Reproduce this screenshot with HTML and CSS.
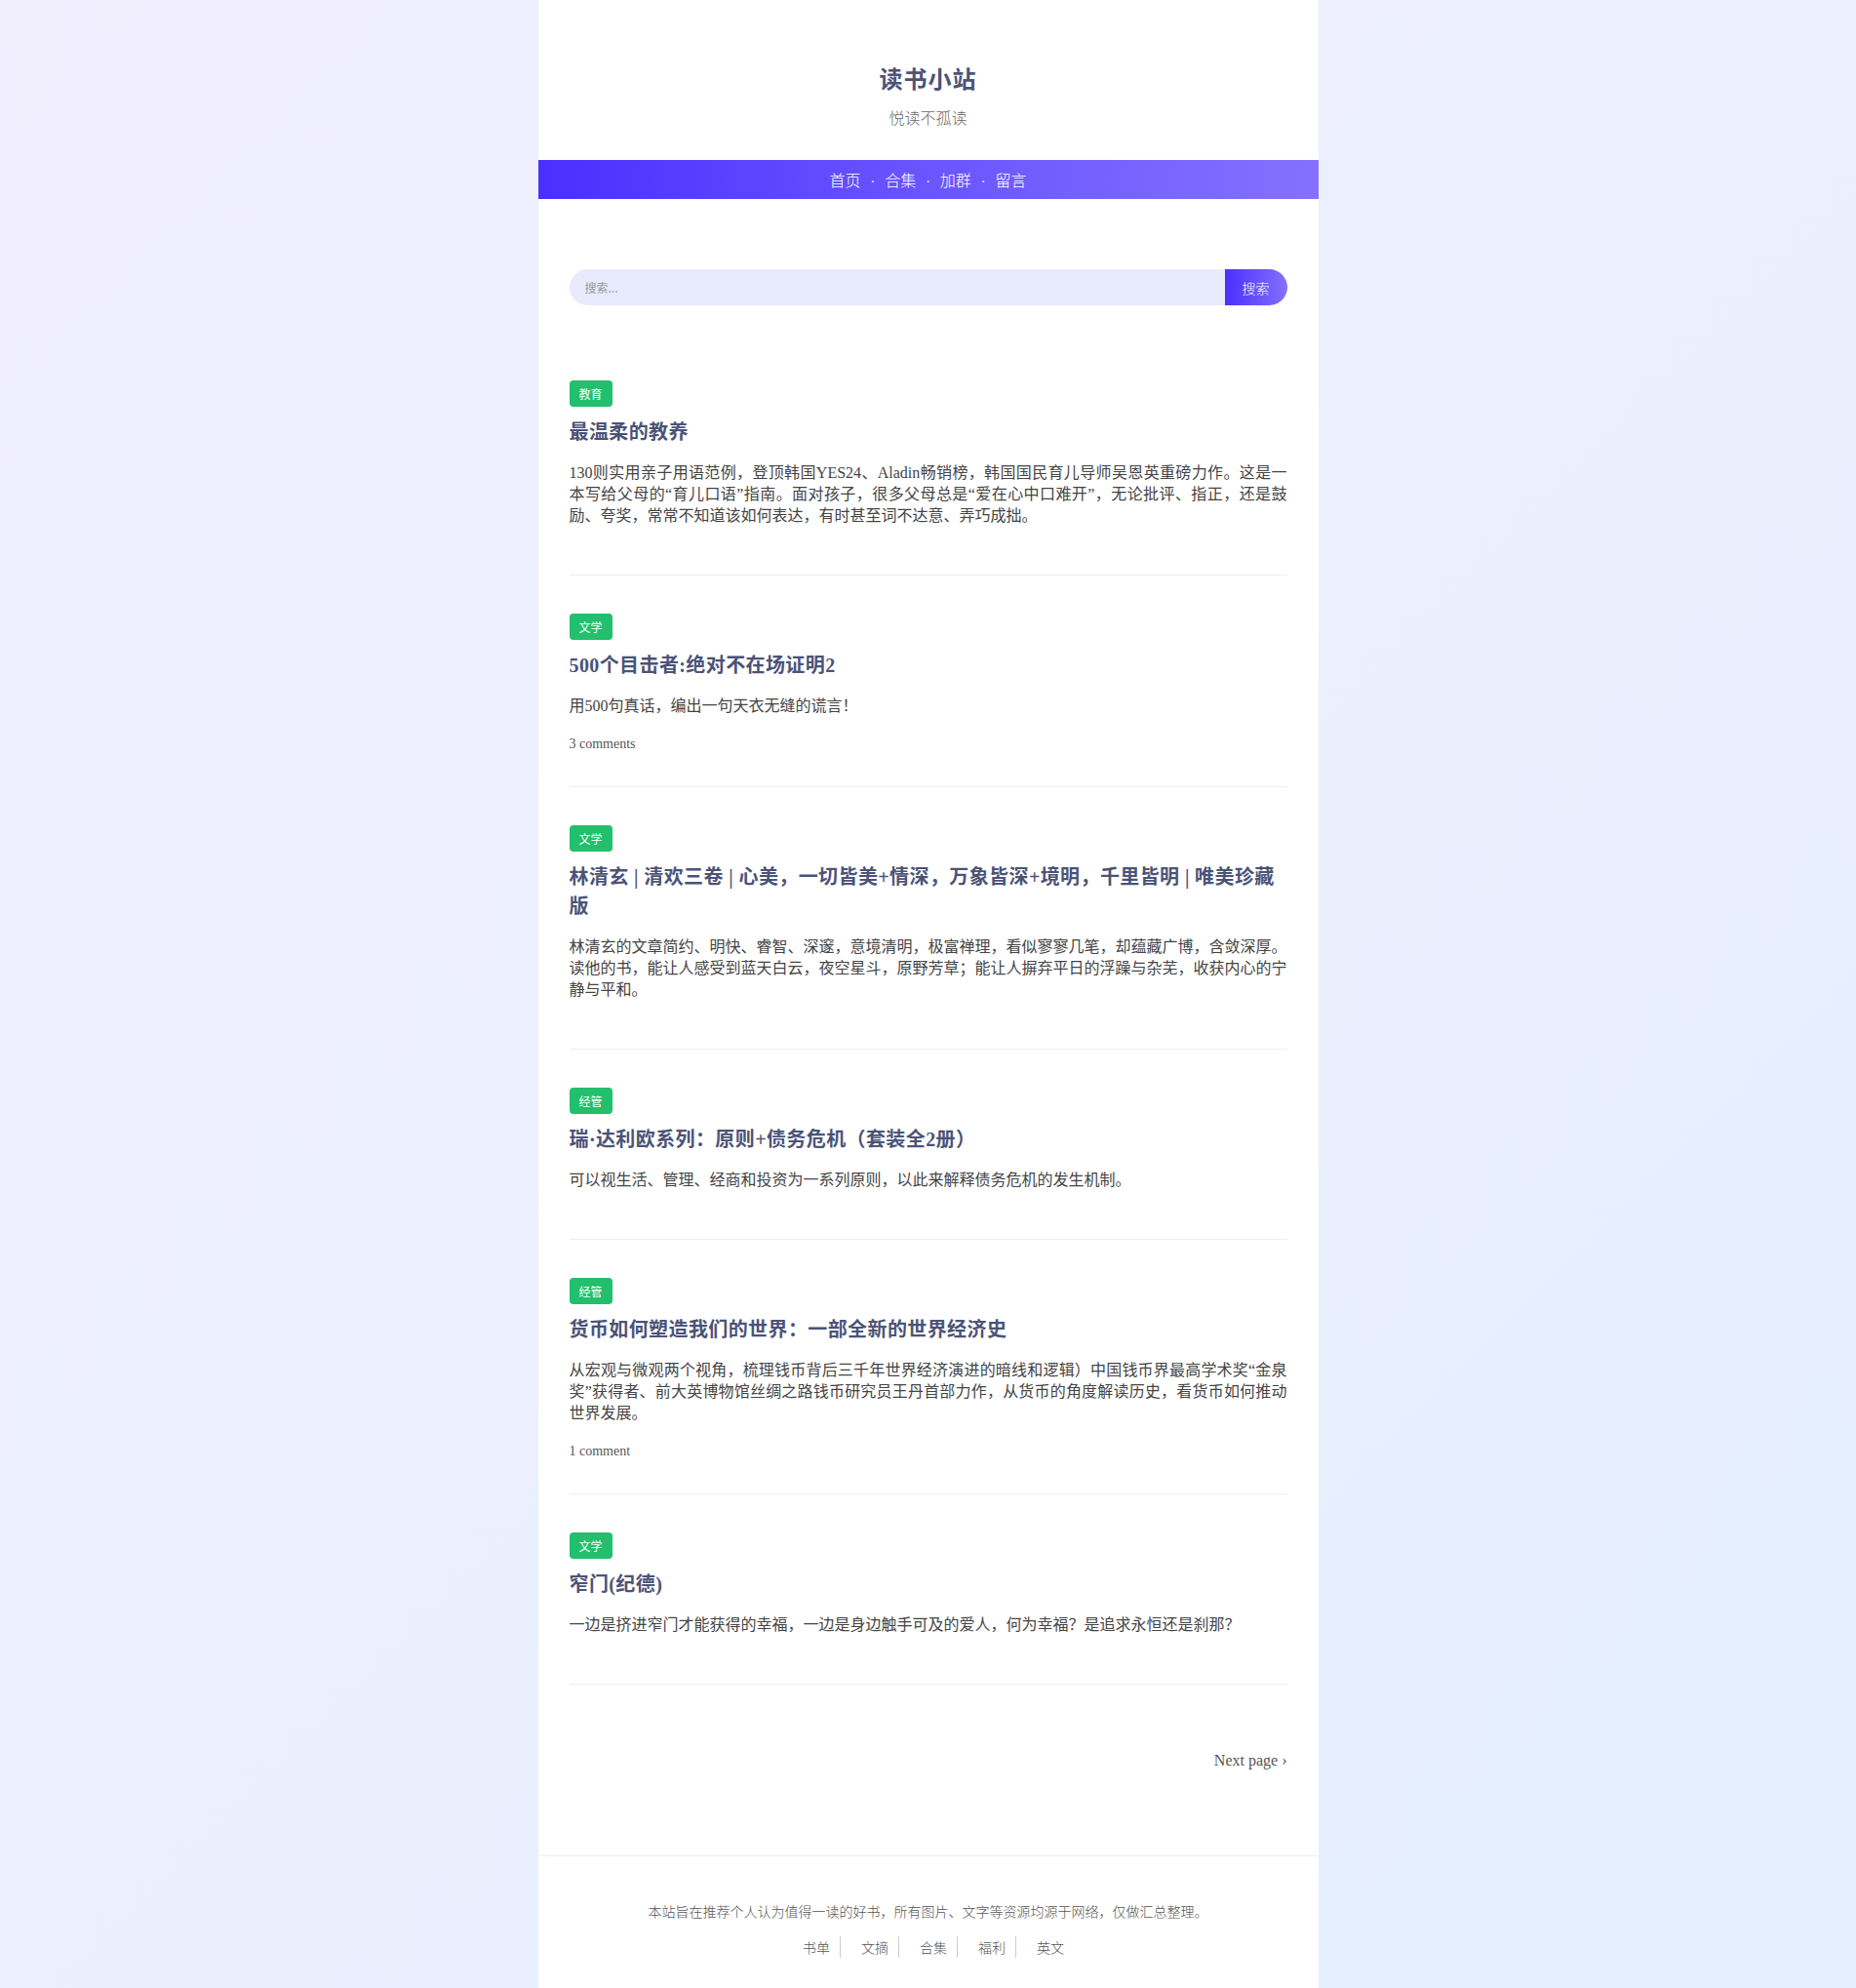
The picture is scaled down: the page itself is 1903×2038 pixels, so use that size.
FILE: index.html
```html
<!DOCTYPE html>
<html lang="zh-CN">
<head>
<meta charset="utf-8">
<title>读书小站</title>
<link rel="stylesheet" href="styles.css">
</head>
<body>
<div class="page">
  <header class="site-header">
    <h1 class="site-title">读书小站</h1>
    <p class="site-desc">悦读不孤读</p>
  </header>
  <nav class="site-nav">
    <a href="#">首页</a><span class="dot">·</span><a href="#">合集</a><span class="dot">·</span><a href="#">加群</a><span class="dot">·</span><a href="#">留言</a>
  </nav>
  <main class="main">
    <form class="search">
      <input class="search-input" type="text" placeholder="搜索...">
      <button class="search-btn" type="button">搜索</button>
    </form>

    <article class="post">
      <span class="tag">教育</span>
      <h2 class="post-title">最温柔的教养</h2>
      <p class="post-excerpt">130则实用亲子用语范例，登顶韩国YES24、Aladin畅销榜，韩国国民育儿导师吴恩英重磅力作。这是一本写给父母的“育儿口语”指南。面对孩子，很多父母总是“爱在心中口难开”，无论批评、指正，还是鼓励、夸奖，常常不知道该如何表达，有时甚至词不达意、弄巧成拙。</p>
    </article>

    <article class="post">
      <span class="tag">文学</span>
      <h2 class="post-title">500个目击者:绝对不在场证明2</h2>
      <p class="post-excerpt">用500句真话，编出一句天衣无缝的谎言！</p>
      <p class="comments">3 comments</p>
    </article>

    <article class="post">
      <span class="tag">文学</span>
      <h2 class="post-title">林清玄 | 清欢三卷 | 心美，一切皆美+情深，万象皆深+境明，千里皆明 | 唯美珍藏版</h2>
      <p class="post-excerpt">林清玄的文章简约、明快、睿智、深邃，意境清明，极富禅理，看似寥寥几笔，却蕴藏广博，含敛深厚。读他的书，能让人感受到蓝天白云，夜空星斗，原野芳草；能让人摒弃平日的浮躁与杂芜，收获内心的宁静与平和。</p>
    </article>

    <article class="post">
      <span class="tag">经管</span>
      <h2 class="post-title">瑞·达利欧系列：原则+债务危机（套装全2册）</h2>
      <p class="post-excerpt">可以视生活、管理、经商和投资为一系列原则，以此来解释债务危机的发生机制。</p>
    </article>

    <article class="post">
      <span class="tag">经管</span>
      <h2 class="post-title">货币如何塑造我们的世界：一部全新的世界经济史</h2>
      <p class="post-excerpt">从宏观与微观两个视角，梳理钱币背后三千年世界经济演进的暗线和逻辑）中国钱币界最高学术奖“金泉奖”获得者、前大英博物馆丝绸之路钱币研究员王丹首部力作，从货币的角度解读历史，看货币如何推动世界发展。</p>
      <p class="comments">1 comment</p>
    </article>

    <article class="post">
      <span class="tag">文学</span>
      <h2 class="post-title">窄门(纪德)</h2>
      <p class="post-excerpt">一边是挤进窄门才能获得的幸福，一边是身边触手可及的爱人，何为幸福？是追求永恒还是刹那？</p>
    </article>

    <div class="pager"><a href="#">Next page ›</a></div>
  </main>
  <footer class="site-footer">
    <p class="footer-text">本站旨在推荐个人认为值得一读的好书，所有图片、文字等资源均源于网络，仅做汇总整理。</p>
    <div class="footer-links">
      <a href="#">书单</a><a href="#">文摘</a><a href="#">合集</a><a href="#">福利</a><a href="#">英文</a>
    </div>
  </footer>
</div>
</body>
</html>
```

FILE: styles.css
```css
html, body {
  margin: 0;
  padding: 0;
}
body {
  min-height: 2038px;
  background: linear-gradient(135deg, #f1eefe 0%, #ebeffe 50%, #e4effd 100%);
  font-family: "Liberation Serif", "Noto Sans CJK SC", serif;
  color: #444;
}
a {
  text-decoration: none;
  color: inherit;
}
.page {
  width: 800px;
  margin: 0 auto;
  background: #fff;
  min-height: 2038px;
  display: flex;
  flex-direction: column;
}
.site-header {
  padding: 64px 0 32px;
  text-align: center;
}
.site-title {
  margin: 0;
  font-size: 24px;
  line-height: 36px;
  font-weight: 700;
  color: #4b5377;
  letter-spacing: 1px;
}
.site-desc {
  margin: 8px 0 0;
  font-size: 16px;
  line-height: 24px;
  color: #666;
  font-family: "Noto Sans CJK SC", sans-serif;
  font-weight: 300;
}
.site-nav {
  height: 40px;
  line-height: 40px;
  text-align: center;
  background: linear-gradient(90deg, #4a2fff 0%, #6a55ff 50%, #8570ff 100%);
  color: #fff;
  font-size: 16px;
  font-family: "Noto Sans CJK SC", sans-serif;
  font-weight: 300;
}
.site-nav .dot {
  margin: 0 10px;
  font-family: "Liberation Serif", serif;
  font-size: 14px;
}
.main {
  padding: 72px 32px 0;
  flex: 1;
}
.search {
  display: flex;
  height: 37px;
  margin: 0 0 38px;
  border-radius: 19px;
  overflow: hidden;
}
.search-input {
  flex: 1;
  border: 0;
  outline: 0;
  background: #e8ebfd;
  padding: 0 16px;
  font-size: 12px;
  font-family: "Noto Sans CJK SC", sans-serif;
  color: #333;
}
.search-input::placeholder {
  color: #999;
}
.search-btn {
  width: 64px;
  border: 0;
  padding: 0;
  background: linear-gradient(90deg, #4a2fff, #8570ff);
  color: #fff;
  font-size: 14px;
  font-family: "Noto Sans CJK SC", sans-serif;
  font-weight: 300;
}
.post {
  padding: 39px 0 33px;
  border-bottom: 1px solid #eceff1;
}
.tag {
  display: inline-block;
  height: 27px;
  line-height: 27px;
  padding: 0 10px;
  border-radius: 4px;
  background: #22bf6c;
  color: #fff;
  font-size: 12px;
  font-family: "Noto Sans CJK SC", sans-serif;
  vertical-align: top;
}
.post-title {
  margin: 11px 0 0;
  font-size: 20px;
  line-height: 30px;
  font-weight: 700;
  color: #4b5377;
  letter-spacing: 0.4px;
}
.post-excerpt {
  margin: 16px 0 16px;
  font-size: 16px;
  line-height: 22px;
  color: #444;
  text-align: justify;
}
.comments {
  margin: 18px 0 0;
  font-size: 14px;
  line-height: 20px;
  color: #555;
}
.pager {
  margin: 68px 0 0;
  text-align: right;
  font-size: 16px;
  line-height: 20px;
  color: #555;
  padding-bottom: 87px;
}
.site-footer {
  border-top: 1px solid #eee;
  padding: 46px 0 33px;
  text-align: center;
  font-family: "Noto Sans CJK SC", sans-serif;
  font-weight: 300;
  color: #555;
}
.footer-text {
  margin: 0;
  font-size: 14px;
  line-height: 20px;
}
.footer-links {
  margin-top: 16px;
  font-size: 14px;
  line-height: 22px;
  display: flex;
  justify-content: center;
}
.footer-links a {
  padding: 0 10px;
  margin-left: 11px;
  border-right: 1px solid #ccc;
}
.footer-links a:last-child {
  border-right: 0;
}
```
